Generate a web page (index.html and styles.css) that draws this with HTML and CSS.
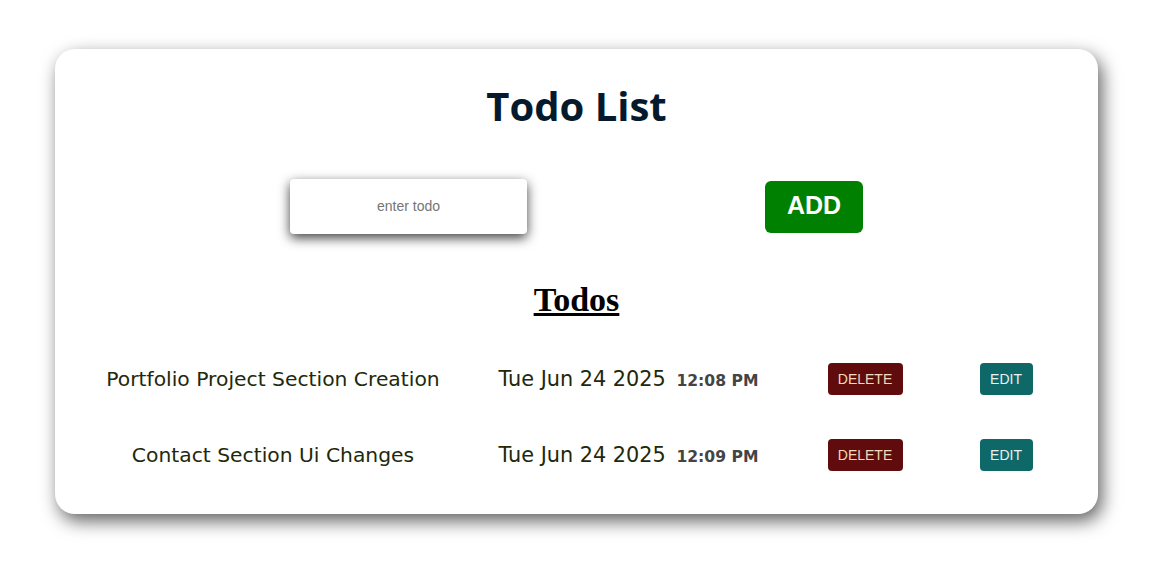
FILE: index.html
```html
<!DOCTYPE html>
<html>
<head>
<meta charset="utf-8">
<link rel="stylesheet" href="styles.css">
</head>
<body>
<div class="card">
  <h1 class="title">Todo List</h1>
  <div class="add-row">
    <input class="todo-input" type="text" placeholder="enter todo">
    <button class="add-btn">ADD</button>
  </div>
  <h2 class="todos-heading">Todos</h2>
  <div class="list">
    <div class="item">
      <div class="item-text">Portfolio Project Section Creation</div>
      <div class="item-date">Tue Jun 24 2025 <span class="item-time">12:08 PM</span></div>
      <div class="item-action"><button class="btn-delete">DELETE</button></div>
      <div class="item-action"><button class="btn-edit">EDIT</button></div>
    </div>
    <div class="item">
      <div class="item-text">Contact Section Ui Changes</div>
      <div class="item-date">Tue Jun 24 2025 <span class="item-time">12:09 PM</span></div>
      <div class="item-action"><button class="btn-delete">DELETE</button></div>
      <div class="item-action"><button class="btn-edit">EDIT</button></div>
    </div>
  </div>
</div>
</body>
</html>
```
FILE: styles.css
```css
html, body {
  margin: 0;
  padding: 0;
  background: #ffffff;
}
body {
  padding: 49px 58px 49px 55px;
}
.card {
  box-sizing: border-box;
  width: 1043px;
  height: 465px;
  background: #ffffff;
  border-radius: 20px;
  box-shadow: 4px 7px 18px rgba(0, 0, 0, 0.62);
  padding-top: 29px;
}
.title {
  margin: 0;
  height: 56px;
  line-height: 56px;
  text-align: center;
  font-family: "Open Sans", "Noto Sans", sans-serif;
  font-weight: 700;
  font-size: 40px;
  color: #051a2c;
}
.add-row {
  display: flex;
  justify-content: center;
  align-items: center;
  gap: 238px;
  margin-top: 45px;
}
.todo-input {
  box-sizing: border-box;
  width: 237px;
  height: 55px;
  border: none;
  border-radius: 4px;
  background: #fff;
  box-shadow: 0 4px 12px rgba(0, 0, 0, 0.75);
  text-align: center;
  font-family: "Liberation Sans", Arial, sans-serif;
  font-size: 14px;
  outline: none;
  padding: 0 0 2px 0;
}
.todo-input::placeholder {
  color: #757575;
}
.add-btn {
  box-sizing: border-box;
  width: 98px;
  height: 52px;
  border: none;
  border-radius: 6px;
  background: #008000;
  color: #ffffff;
  font-family: "Liberation Sans", Arial, sans-serif;
  font-weight: 700;
  font-size: 25px;
  padding: 0 0 2px 0;
}
.todos-heading {
  margin: 46px 0 0 0;
  height: 40px;
  line-height: 40px;
  text-align: center;
  font-family: "Liberation Serif", "Times New Roman", serif;
  font-weight: 700;
  font-size: 34px;
  text-decoration: underline;
  color: #000;
}
.list {
  margin-top: 43px;
}
.item {
  display: grid;
  grid-template-columns: 366px 343px 132px 150px;
  padding-left: 35px;
  height: 76px;
  align-items: start;
}
.item-text {
  text-align: center;
  font-family: "DejaVu Sans", Verdana, sans-serif;
  font-size: 20.3px;
  line-height: 32px;
  color: #22280a;
}
.item-date {
  text-align: center;
  font-family: "DejaVu Sans", Verdana, sans-serif;
  font-size: 20.8px;
  line-height: 32px;
  color: #22280a;
  padding-left: 2px;
}
.item-time {
  font-weight: 700;
  font-size: 15.6px;
  color: #444444;
  margin-left: 4px;
}
.item-action {
  display: flex;
  justify-content: center;
}
.btn-delete, .btn-edit {
  box-sizing: border-box;
  height: 32px;
  border: none;
  border-radius: 4px;
  font-family: "Liberation Sans", Arial, sans-serif;
  font-size: 14px;
  padding: 0;
}
.btn-delete {
  width: 75px;
  background: #600c0c;
  color: #f5d9bd;
}
.btn-edit {
  width: 53px;
  background: #0f6868;
  color: #e8f2f2;
}
```
